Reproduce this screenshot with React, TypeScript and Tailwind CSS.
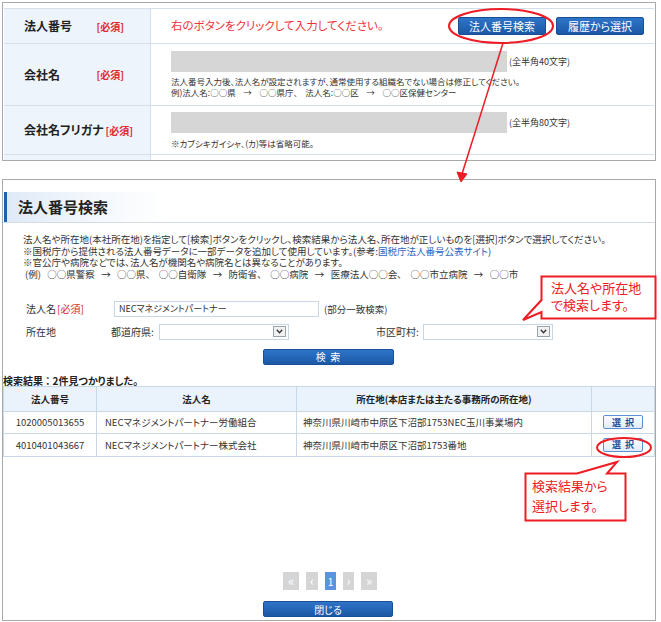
import React from "react";

const jp = "[font-family:'Noto_Sans_CJK_JP','Noto_Sans',sans-serif] [font-feature-settings:'palt']";

function Required({ className = "" }: { className?: string }) {
  return <span className={"text-[#e0262b] font-bold text-[10px] whitespace-nowrap shrink-0 " + className}>[必須]</span>;
}

function FormRow({ label, height, children }: { label: string; height: string; children?: React.ReactNode }) {
  return (
    <div className={"flex border-b border-[#d3dfeb] " + height}>
      <div className="w-[147px] shrink-0 bg-[#eef4fb] border-r border-[#d3dfeb] flex items-center pl-[20px] pr-[26px]">
        {label && (
          <>
            <span className="text-[12px] font-bold text-[#222] whitespace-nowrap shrink-0">{label}</span>
            <Required className="ml-auto pl-[2px]" />
          </>
        )}
      </div>
      <div className="flex-1 pl-[20px] pr-[10px]">{children}</div>
    </div>
  );
}

function SelectBox({ width }: { width: string }) {
  return (
    <div className={"h-[16px] border border-[#c9d6e3] bg-white flex items-center justify-end pr-[2px] " + width}>
      <div className="w-[13px] h-[11px] border border-[#9aa4ad] bg-[#f1f1f1] flex items-center justify-center">
        <svg width="7" height="5" viewBox="0 0 7 5">
          <path d="M0.8 0.8 L3.5 3.8 L6.2 0.8" fill="none" stroke="#333" strokeWidth="1.3" />
        </svg>
      </div>
    </div>
  );
}

function BlueButton({ label, className = "" }: { label: string; className?: string }) {
  return (
    <div
      className={
        "h-[16px] rounded-[2px] bg-gradient-to-b from-[#2f74c8] to-[#1b58a6] border border-[#184f94] text-white text-[10px] flex items-center justify-center whitespace-pre " +
        className
      }
    >
      {label}
    </div>
  );
}

function PageBtn({ label, w, active = false }: { label: string; w: string; active?: boolean }) {
  return (
    <div
      className={
        "h-[18px] flex items-center justify-center text-white " +
        w +
        (active ? " bg-[#5b93de] text-[10px]" : " bg-[#d5d5d5] text-[13px] leading-none pb-[2px]")
      }
    >
      {label}
    </div>
  );
}

const rows = [
  { no: "1020005013655", name: "NECマネジメントパートナー労働組合", addr: "神奈川県川崎市中原区下沼部1753NEC玉川事業場内" },
  { no: "4010401043667", name: "NECマネジメントパートナー株式会社", addr: "神奈川県川崎市中原区下沼部1753番地" },
];

export default function App() {
  return (
    <div className={"relative w-[661px] h-[622px] bg-white overflow-hidden text-[#333] " + jp}>
      {/* top form panel */}
      <div className="ml-[2px] mt-[2px] w-[654px] h-[159px] border border-[#a9a9a9] overflow-hidden px-[1px] pt-[5px]">
        <div className="border-t border-[#d3dfeb]">
          <FormRow label="法人番号" height="h-[35px]">
            <div className="h-full flex items-center">
              <span className="text-[11.5px] text-[#f0323a]">右のボタンをクリックして入力してください。</span>
              <div className="ml-auto flex gap-[10px] items-center">
                <BlueButton label="法人番号検索" className="w-[88px] h-[18px] text-[11px]" />
                <BlueButton label="履歴から選択" className="w-[88px] h-[18px] text-[11px]" />
              </div>
            </div>
          </FormRow>
          <FormRow label="会社名" height="h-[62px]">
            <div className="pt-[7px]">
              <div className="flex items-center">
                <div className="w-[336px] h-[21px] bg-[#d6d6d6]" />
                <span className="ml-[2px] text-[9px]">(全半角40文字)</span>
              </div>
              <div className="mt-[4px] text-[8.5px] leading-[10.5px] text-[#333] whitespace-pre">
                <div>法人番号入力後、法人名が設定されますが、通常使用する組織名でない場合は修正してください。</div>
                <div>例)法人名:○○県    →    ○○県庁、    法人名:○○区    →    ○○区保健センター</div>
              </div>
            </div>
          </FormRow>
          <FormRow label="会社名フリガナ" height="h-[49px]">
            <div className="pt-[6px]">
              <div className="flex items-center">
                <div className="w-[336px] h-[21px] bg-[#d6d6d6]" />
                <span className="ml-[2px] text-[9px]">(全半角80文字)</span>
              </div>
              <div className="mt-[5px] text-[8.5px] leading-[10.5px]">※カブシキガイシャ、(カ)等は省略可能。</div>
            </div>
          </FormRow>
          <FormRow label="" height="h-[20px]" />
        </div>
      </div>

      {/* search dialog */}
      <div className="ml-[2px] mt-[18px] w-[654px] h-[442px] border border-[#a9a9a9] flex flex-col">
        <div className="mt-[12px] h-[31px] border-b border-[#d5dbe2] flex items-center">
          <div className="h-full w-[3px] bg-[#1e5fae] ml-[1px]" />
          <div className="h-full flex items-center pl-[11px] pr-[60px] bg-gradient-to-r from-[#dfeaf7] via-[#f3f7fc] to-white">
            <span className="text-[15px] font-bold text-[#222]">法人番号検索</span>
          </div>
        </div>

        <div className="pl-[20px] pt-[11px] text-[9.5px] leading-[11.7px] whitespace-pre">
          <div>法人名や所在地(本社所在地)を指定して[検索]ボタンをクリックし、検索結果から法人名、所在地が正しいものを[選択]ボタンで選択してください。</div>
          <div>
            ※国税庁から提供される法人番号データに一部データを追加して使用しています。(参考:
            <span className="text-[#2a64c0]">国税庁法人番号公表サイト</span>)
          </div>
          <div>※官公庁や病院などでは、法人名が機関名や病院名とは異なることがあります。</div>
          <div className="pl-[2px]">(例)   ○○県警察   →   ○○県、    ○○自衛隊   →   防衛省、    ○○病院   →   医療法人○○会、    ○○市立病院   →   ○○市</div>
        </div>

        <div className="pl-[23px] pt-[20px] text-[10px]">
          <div className="flex items-center h-[16px]">
            <div className="w-[88px] flex items-center">
              <span className="w-[31px]">法人名</span>
              <Required className="font-normal text-[9.5px]" />
            </div>
            <div className="w-[205px] h-[16px] border border-[#c9d6e3] flex items-center pl-[4px] text-[9px]">
              NECマネジメントパートナー
            </div>
            <span className="ml-[5px] text-[9.5px]">(部分一致検索)</span>
          </div>
          <div className="flex items-center h-[16px] mt-[7px]">
            <span className="w-[85px]">所在地</span>
            <span className="w-[48px]">都道府県:</span>
            <SelectBox width="w-[130px]" />
            <span className="ml-[87px] w-[47px]">市区町村:</span>
            <SelectBox width="w-[130px]" />
          </div>
        </div>

        <div className="flex justify-center pt-[9px] pr-[2px]">
          <BlueButton label="検  索" className="w-[131px]" />
        </div>

        <div className="pt-[10px] text-[10px] font-bold text-[#222] leading-[11px]">検索結果 ： 2件見つかりました。</div>

        <div className="border border-[#c9d8e6] text-[9.5px]">
          <div className="flex h-[25px] bg-[#eaf2fb] font-bold text-[#222] border-b border-[#c9d8e6]">
            <div className="w-[93px] border-r border-[#c9d8e6] flex items-center justify-center">法人番号</div>
            <div className="w-[200px] border-r border-[#c9d8e6] flex items-center justify-center">法人名</div>
            <div className="w-[295px] border-r border-[#c9d8e6] flex items-center justify-center">所在地(本店または主たる事務所の所在地)</div>
            <div className="flex-1" />
          </div>
          {rows.map((r, i) => (
            <div key={r.no} className={"flex h-[22px]" + (i === 0 ? " border-b border-[#c9d8e6]" : "")}>
              <div className="w-[93px] border-r border-[#c9d8e6] flex items-center justify-center">{r.no}</div>
              <div className="w-[200px] border-r border-[#c9d8e6] flex items-center pl-[8px]">{r.name}</div>
              <div className="w-[295px] border-r border-[#c9d8e6] flex items-center pl-[6px]">{r.addr}</div>
              <div className="flex-1 flex items-center justify-center">
                <div className="w-[40px] h-[14px] border border-[#5a8fd6] rounded-[2px] bg-gradient-to-b from-white to-[#dfeafa] text-[#1c4f9a] font-bold text-[9px] flex items-center justify-center whitespace-pre">
                  {"選  択"}
                </div>
              </div>
            </div>
          ))}
        </div>

        <div className="flex-1" />

        <div className="flex justify-center gap-[7px] pl-[2px]">
          <PageBtn label="«" w="w-[16px]" />
          <PageBtn label="‹" w="w-[12px]" />
          <PageBtn label="1" w="w-[11px]" active />
          <PageBtn label="›" w="w-[11px]" />
          <PageBtn label="»" w="w-[16px]" />
        </div>
        <div className="flex justify-center pt-[11px] pb-[3px] pr-[2px]">
          <BlueButton label="閉じる" className="w-[130px]" />
        </div>
      </div>

      {/* annotations */}
      <svg className="absolute left-0 top-0 pointer-events-none" width="661" height="622" viewBox="0 0 661 622">
        <ellipse cx="501" cy="26" rx="52" ry="17" fill="none" stroke="#ee1c24" strokeWidth="2" />
        <line x1="503" y1="43" x2="462" y2="174" stroke="#ee1c24" strokeWidth="1.5" />
        <path d="M457 172 L461 182 L467 174 Z" fill="#ee1c24" stroke="#ee1c24" strokeWidth="1" />
        <ellipse cx="624" cy="447.5" rx="27" ry="9.5" fill="none" stroke="#ee1c24" strokeWidth="2" />
        <path
          d="M541.5 276.5 H655.5 V318.5 H541.5 V312 L523 320 L541.5 300 Z"
          fill="white"
          stroke="#ee1c24"
          strokeWidth="2"
        />
        <path
          d="M525.5 473.5 H577 L617 462 L607 473.5 H625.5 V520.5 H525.5 Z"
          fill="white"
          stroke="#ee1c24"
          strokeWidth="2"
        />
      </svg>
      <div className="absolute left-[551px] top-[279px] text-[13px] leading-[17px] text-[#ee1c24] whitespace-nowrap">
        <div>法人名や所在地</div>
        <div>で検索します。</div>
      </div>
      <div className="absolute left-[532px] top-[476px] text-[13px] leading-[20px] text-[#ee1c24] whitespace-nowrap">
        <div>検索結果から</div>
        <div>選択します。</div>
      </div>
    </div>
  );
}
